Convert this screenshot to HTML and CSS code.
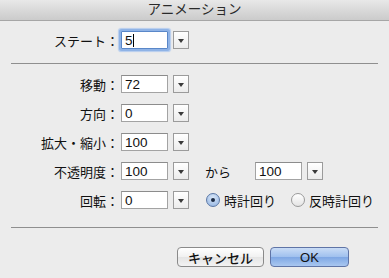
FILE: index.html
```html
<!DOCTYPE html>
<html lang="ja">
<head>
  <meta charset="UTF-8" />
  <meta name="viewport" content="width=device-width, initial-scale=1" />
  <title>アニメーション</title>
  <link rel="stylesheet" href="styles.css">
</head>
<body>

  <div class="dialog">
    <div class="titlebar">アニメーション</div>

    <div class="row state">
      <span class="label">ステート：</span>
      <span class="field focus">5<span class="caret"></span></span>
      <span class="drop"></span>
    </div>

    <div class="sep sep-top"></div>

    <div class="rows">
      <div class="row">
        <span class="label">移動：</span>
        <span class="field">72</span>
        <span class="drop"></span>
      </div>
      <div class="row">
        <span class="label">方向：</span>
        <span class="field">0</span>
        <span class="drop"></span>
      </div>
      <div class="row">
        <span class="label">拡大・縮小：</span>
        <span class="field">100</span>
        <span class="drop"></span>
      </div>
      <div class="row">
        <span class="label">不透明度：</span>
        <span class="field">100</span>
        <span class="drop"></span>
        <span class="from">から</span>
        <span class="field">100</span>
        <span class="drop"></span>
      </div>
      <div class="row">
        <span class="label">回転：</span>
        <span class="field">0</span>
        <span class="drop"></span>
        <span class="radio checked"></span>
        <span class="radio-text">時計回り</span>
        <span class="radio second"></span>
        <span class="radio-text">反時計回り</span>
      </div>
    </div>

    <div class="sep sep-bottom"></div>

    <div class="buttons">
      <button class="btn">キャンセル</button>
      <button class="btn default">OK</button>
    </div>
  </div>

</body>
</html>
```

FILE: styles.css
```css
body {
  margin: 0;
  background: #ececec;
  font-family: "Liberation Sans", "Noto Sans CJK JP", sans-serif;
  font-size: 13px;
  color: #111;
}

.dialog {
  width: 389px;
  height: 278px;
  background: #ececec;
  overflow: hidden;
}

.titlebar {
  height: 20px;
  line-height: 20px;
  font-size: 13.5px;
  text-align: center;
  color: #2a2a2a;
  background: linear-gradient(#e8e8e8, #cbcbcb);
  border-bottom: 1px solid #a6a6a6;
}

.row {
  display: flex;
  align-items: center;
  height: 18px;
}

.state {
  margin-top: 10px;
}

.label {
  width: 119px;
  margin-right: 2px;
  text-align: right;
  white-space: nowrap;
}

.field {
  box-sizing: border-box;
  width: 47px;
  height: 18px;
  padding-left: 3px;
  line-height: 17px;
  font-size: 13.5px;
  background: #fff;
  border: 1px solid #a3a3a3;
  border-top-color: #8c8c8c;
}

.field.focus {
  border-color: #5a87c8;
  border-radius: 1px;
  box-shadow: 0 0 0 2px #8fb3e6, 0 0 1px 3px #b5cdef;
}

.caret {
  display: inline-block;
  width: 1px;
  height: 13px;
  background: #000;
  vertical-align: -2px;
}

.drop {
  box-sizing: border-box;
  position: relative;
  width: 16px;
  height: 18px;
  margin-left: 5px;
  background: linear-gradient(#ffffff, #ececec);
  border: 1px solid #9b9b9b;
}

.drop::after {
  content: "";
  position: absolute;
  left: 3.5px;
  top: 6.5px;
  border-left: 3.5px solid transparent;
  border-right: 3.5px solid transparent;
  border-top: 4px solid #3a3a3a;
}

.sep {
  height: 1px;
  margin: 0 11px;
  background: #8f8f8f;
}

.sep-top {
  margin-top: 14px;
}

.rows {
  display: flex;
  flex-direction: column;
  gap: 11px;
  margin-top: 11px;
}

.from {
  margin-left: 16px;
  margin-right: 24px;
}

.radio {
  box-sizing: border-box;
  width: 14px;
  height: 14px;
  margin-left: 17px;
  margin-right: 4px;
  border-radius: 50%;
  border: 1px solid #9a9a9a;
  background: linear-gradient(#ffffff, #e4e4e4);
}

.radio.second {
  margin-left: 15px;
}

.radio.checked {
  position: relative;
  border-color: #5b78a6;
  background: radial-gradient(circle at 50% 30%, #d9e7f8, #8fb1e0);
}

.radio.checked::after {
  content: "";
  position: absolute;
  left: 4px;
  top: 4px;
  width: 4px;
  height: 4px;
  border-radius: 50%;
  background: #1c2b44;
}

.sep-bottom {
  margin-top: 18px;
}

.buttons {
  display: flex;
  justify-content: flex-end;
  gap: 6px;
  margin-top: 19px;
  padding-right: 40px;
}

.btn {
  box-sizing: border-box;
  width: 87px;
  height: 20px;
  padding: 0;
  font-family: "Liberation Sans", "Noto Sans CJK JP", sans-serif;
  font-size: 13px;
  font-weight: 500;
  color: #111;
  background: linear-gradient(#ffffff, #f1f1f1 50%, #e4e4e4 51%, #f3f3f3);
  border: 1px solid #8a8a8a;
  border-radius: 4px;
}

.btn.default {
  width: 79px;
  border-color: #5f74a6;
  background: linear-gradient(#c9dcf6, #9fc0ee 50%, #7ea7e4 51%, #a9c7f0);
}
```
